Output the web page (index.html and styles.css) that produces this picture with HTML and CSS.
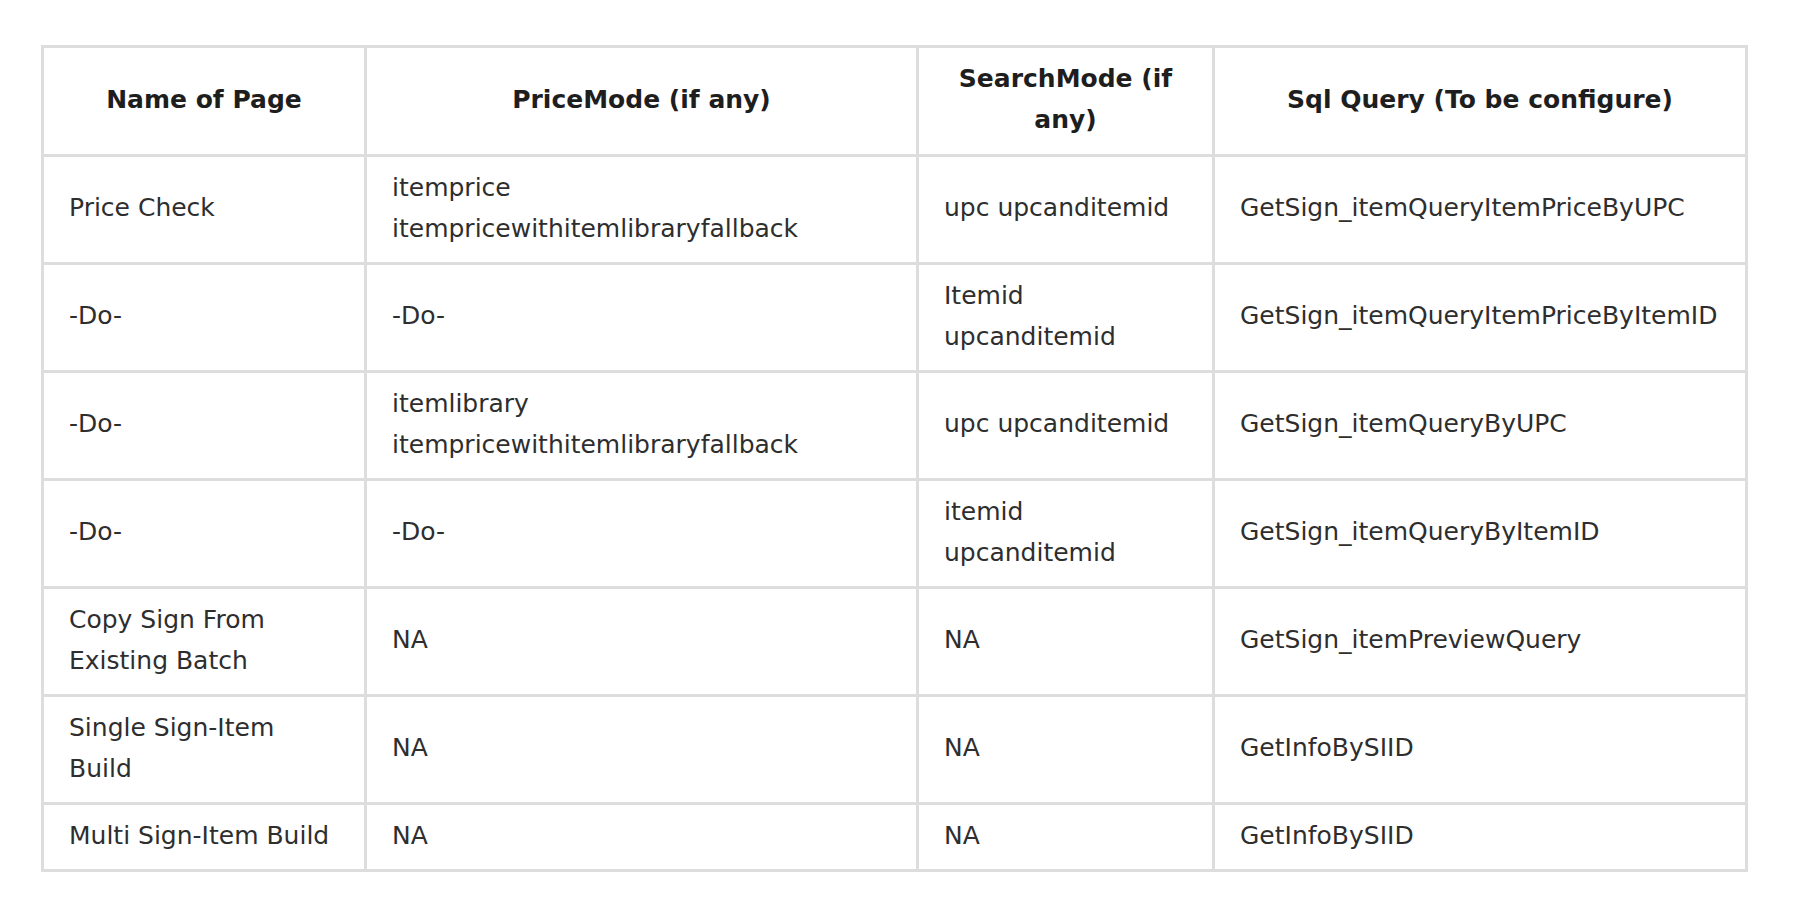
FILE: index.html
```html
<!DOCTYPE html>
<html>
<head>
<meta charset="utf-8">
<link rel="stylesheet" href="styles.css">
</head>
<body>
<table class="grid">
  <colgroup>
    <col class="c1"><col class="c2"><col class="c3"><col class="c4">
  </colgroup>
  <thead>
    <tr>
      <th>Name of Page</th>
      <th>PriceMode (if any)</th>
      <th>SearchMode (if any)</th>
      <th>Sql Query (To be configure)</th>
    </tr>
  </thead>
  <tbody>
    <tr>
      <td>Price Check</td>
      <td>itemprice itempricewithitemlibraryfallback</td>
      <td>upc upcanditemid</td>
      <td>GetSign_itemQueryItemPriceByUPC</td>
    </tr>
    <tr>
      <td>-Do-</td>
      <td>-Do-</td>
      <td>Itemid upcanditemid</td>
      <td>GetSign_itemQueryItemPriceByItemID</td>
    </tr>
    <tr>
      <td>-Do-</td>
      <td>itemlibrary itempricewithitemlibraryfallback</td>
      <td>upc upcanditemid</td>
      <td>GetSign_itemQueryByUPC</td>
    </tr>
    <tr>
      <td>-Do-</td>
      <td>-Do-</td>
      <td>itemid upcanditemid</td>
      <td>GetSign_itemQueryByItemID</td>
    </tr>
    <tr>
      <td>Copy Sign From Existing Batch</td>
      <td>NA</td>
      <td>NA</td>
      <td>GetSign_itemPreviewQuery</td>
    </tr>
    <tr>
      <td>Single Sign-Item Build</td>
      <td>NA</td>
      <td>NA</td>
      <td>GetInfoBySIID</td>
    </tr>
    <tr>
      <td>Multi Sign-Item Build</td>
      <td>NA</td>
      <td>NA</td>
      <td>GetInfoBySIID</td>
    </tr>
  </tbody>
</table>
</body>
</html>
```
FILE: styles.css
```css
html, body {
  margin: 0;
  padding: 0;
  background: #ffffff;
}

body {
  font-family: "DejaVu Sans", "Liberation Sans", sans-serif;
  font-size: 25px;
  line-height: 41px;
  color: #2e2e2e;
}

.grid {
  margin: 45px 0 0 41px;
  width: 1707px;
  table-layout: fixed;
  border-collapse: separate;
  border-spacing: 0;
  border-left: 3px solid #dddddd;
  border-top: 3px solid #dddddd;
}

.c1 { width: 323px; }
.c2 { width: 552px; }
.c3 { width: 296px; }
.c4 { width: 533px; }

.grid th,
.grid td {
  box-sizing: border-box;
  border-right: 3px solid #dddddd;
  border-bottom: 3px solid #dddddd;
  padding: 9.5px 25px 13.5px;
  vertical-align: middle;
  overflow: visible;
}

.grid th {
  font-weight: bold;
  text-align: center;
  color: #1e1e1e;
  padding-top: 10px;
  padding-bottom: 14px;
}

.grid td {
  text-align: left;
  font-weight: normal;
}
```
